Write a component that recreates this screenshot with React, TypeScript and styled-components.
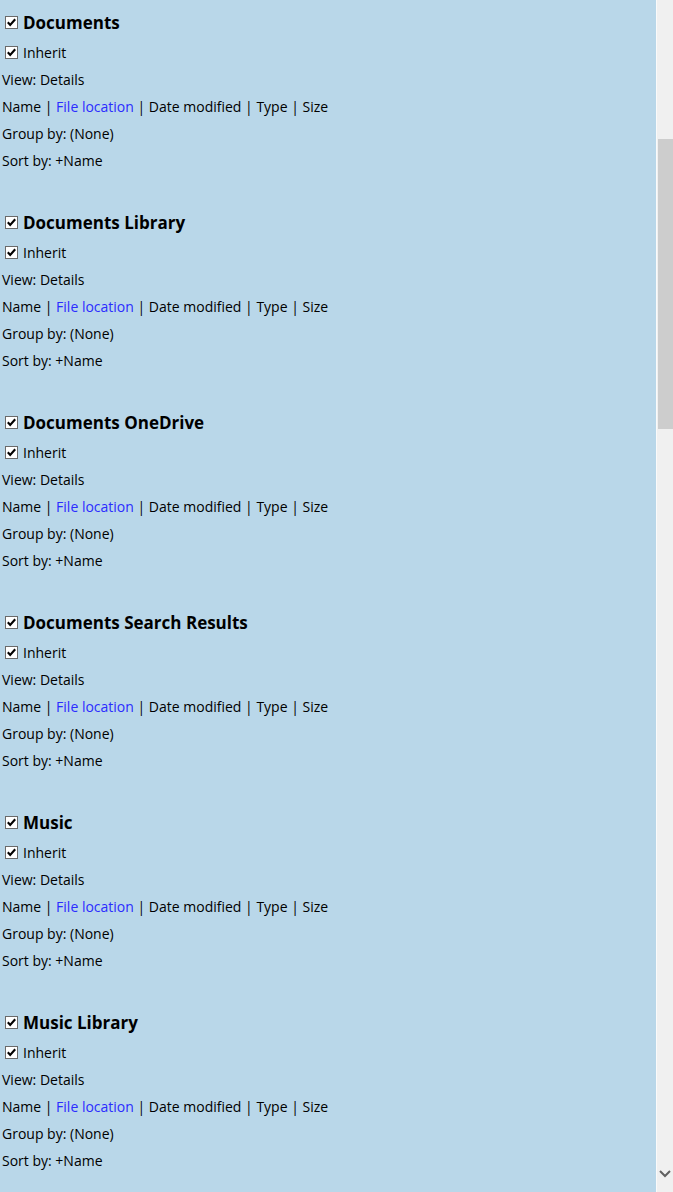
import React from "react";
import styled, { createGlobalStyle } from "styled-components";

const GlobalStyle = createGlobalStyle`
    html, body {
        margin: 0;
        padding: 0;
        height: 100%;
        overflow: hidden;
    }
    #root {
        height: 100%;
    }
`;

const Page = styled.div`
    display: flex;
    height: 100vh;
    background-color: #b9d7e9;
    font-family: "Open Sans", "Noto Sans", sans-serif;
    font-size: 14px;
    color: #000;
`;

const Content = styled.div`
    flex: 1;
    overflow: hidden;
    padding: 9px 0 0 2px;
`;

const Block = styled.section`
    margin-bottom: 35px;
`;

const Heading = styled.div`
    display: flex;
    align-items: center;
    height: 27px;
    margin-bottom: 3px;
    font-size: 17px;
    font-weight: 700;
`;

const Line = styled.div`
    display: flex;
    align-items: center;
    height: 27px;
    white-space: nowrap;
`;

const Box = styled.span`
    display: inline-flex;
    align-items: center;
    justify-content: center;
    box-sizing: border-box;
    width: 13px;
    height: 13px;
    margin: 0 5px 0 3px;
    border: 1px solid #6a6a6a;
    background: #fff;
`;

const Link = styled.span`
    color: #2b2bff;
`;

const Scrollbar = styled.div`
    display: flex;
    flex-direction: column;
    width: 16px;
    background-color: #f0f0f0;
    border-left: 1px solid #fafafa;
`;

const Thumb = styled.div`
    margin: 139px 0 0 1px;
    height: 290px;
    background-color: #cdcdcd;
`;

const Spacer = styled.div`
    flex: 1;
`;

const ArrowDown = styled.div`
    display: flex;
    justify-content: center;
    height: 17px;
    padding-bottom: 5px;
`;

const Check = () => (
    <svg width="11" height="11" viewBox="0 0 11 11">
        <path d="M1.8 5.3 L4.2 8 L9.2 2.2" fill="none" stroke="#000" strokeWidth="2.1" />
    </svg>
);

const sections = [
    "Documents",
    "Documents Library",
    "Documents OneDrive",
    "Documents Search Results",
    "Music",
    "Music Library",
];

function Section({ title }: { title: string }) {
    return (
        <Block>
            <Heading>
                <Box><Check /></Box>
                {title}
            </Heading>
            <Line>
                <Box><Check /></Box>
                Inherit
            </Line>
            <Line>View: Details</Line>
            <Line>
                Name |&nbsp;<Link>File location</Link>&nbsp;| Date modified | Type | Size
            </Line>
            <Line>Group by: (None)</Line>
            <Line>Sort by: +Name</Line>
        </Block>
    );
}

function App() {
    return (
        <Page>
            <GlobalStyle />
            <Content>
                {sections.map((s) => (
                    <Section key={s} title={s} />
                ))}
            </Content>
            <Scrollbar>
                <Thumb />
                <Spacer />
                <ArrowDown>
                    <svg width="12" height="8" viewBox="0 0 12 8">
                        <path d="M1 1 L6 6 L11 1" fill="none" stroke="#606060" strokeWidth="2" />
                    </svg>
                </ArrowDown>
            </Scrollbar>
        </Page>
    );
}

export default App;
